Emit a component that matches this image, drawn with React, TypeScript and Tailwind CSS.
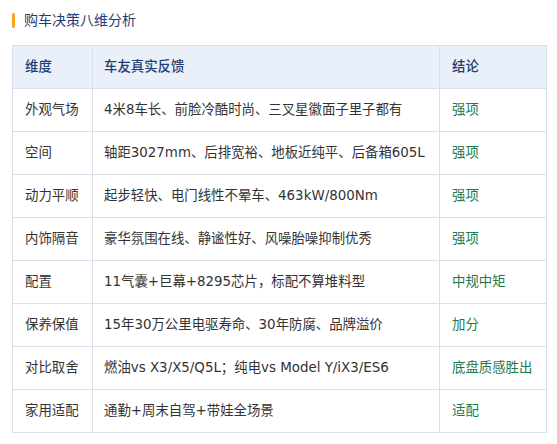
const rows = [
  ['外观气场', '4米8车长、前脸冷酷时尚、三叉星徽面子里子都有', '强项'],
  ['空间', '轴距3027mm、后排宽裕、地板近纯平、后备箱605L', '强项'],
  ['动力平顺', '起步轻快、电门线性不晕车、463kW/800Nm', '强项'],
  ['内饰隔音', '豪华氛围在线、静谧性好、风噪胎噪抑制优秀', '强项'],
  ['配置', '11气囊+巨幕+8295芯片，标配不算堆料型', '中规中矩'],
  ['保养保值', '15年30万公里电驱寿命、30年防腐、品牌溢价', '加分'],
  ['对比取舍', '燃油vs X3/X5/Q5L；纯电vs Model Y/iX3/ES6', '底盘质感胜出'],
  ['家用适配', '通勤+周末自驾+带娃全场景', '适配'],
]

export default function App() {
  return (
    <div className="w-[557px] h-[444px] bg-white px-3 pt-[11px] font-['DejaVu_Sans','Noto_Sans_CJK_SC',sans-serif]">
      <div className="flex items-center gap-[9px] h-[18px]">
        <div className="w-[3px] h-[15px] rounded-full bg-[#f5a623]" />
        <h2 className="text-[14px] leading-[18px] text-[#1f3d73]">购车决策八维分析</h2>
      </div>
      <table className="mt-4 w-[534px] border-collapse table-fixed text-[13.4px] text-[#333]">
        <colgroup>
          <col className="w-[80px]" />
          <col className="w-[347px]" />
          <col className="w-[107px]" />
        </colgroup>
        <thead>
          <tr className="bg-[#e9f0f9] h-[43px]">
            <th className="border border-[#d9e0ea] px-3 text-left font-medium text-[#1f3d73]">维度</th>
            <th className="border border-[#d9e0ea] px-[11px] text-left font-medium text-[#1f3d73]">车友真实反馈</th>
            <th className="border border-[#d9e0ea] px-3 text-left font-medium text-[#1f3d73]">结论</th>
          </tr>
        </thead>
        <tbody>
          {rows.map(r => (
            <tr key={r[0]} className="h-[43px]">
              <td className="border border-[#d9e0ea] px-3 whitespace-nowrap">{r[0]}</td>
              <td className="border border-[#d9e0ea] px-[11px] whitespace-nowrap">{r[1]}</td>
              <td className="border border-[#d9e0ea] px-3 whitespace-nowrap text-[#1d7a4c]">{r[2]}</td>
            </tr>
          ))}
        </tbody>
      </table>
    </div>
  )
}
